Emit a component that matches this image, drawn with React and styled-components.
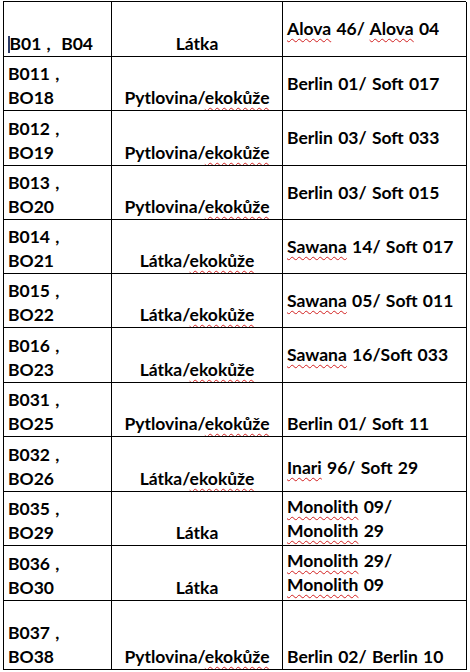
import styled, { createGlobalStyle } from "styled-components";

const GlobalStyle = createGlobalStyle`
  html, body {
    margin: 0;
    padding: 0;
    background: #fff;
  }
  body {
    font-family: Lato, "Liberation Sans", sans-serif;
    color: #000;
  }
`;

// ~word~ marks a word the spell checker flagged
const rows = [
  { h: 55, code: ["B01 ,\u00a0 B04"], caret: true, mat: "Látka", col: ["~Alova~ 46/ ~Alova~ 04"], v: "center" },
  { h: 54, code: ["B011 ,", "BO18"], mat: "Pytlovina/~ekokůže~", col: ["Berlin 01/ Soft 017"], v: "center" },
  { h: 55, code: ["B012 ,", "BO19"], mat: "Pytlovina/~ekokůže~", col: ["Berlin 03/ Soft 033"], v: "center" },
  { h: 54, code: ["B013 ,", "BO20"], mat: "Pytlovina/~ekokůže~", col: ["Berlin 03/ Soft 015"], v: "center" },
  { h: 54, code: ["B014 ,", "BO21"], mat: "Látka/~ekokůže~", col: ["~Sawana~ 14/ Soft 017"], v: "center" },
  { h: 54, code: ["B015 ,", "BO22"], mat: "Látka/~ekokůže~", col: ["~Sawana~ 05/ Soft 011"], v: "center" },
  { h: 55, code: ["B016 ,", "BO23"], mat: "Látka/~ekokůže~", col: ["~Sawana~ 16/Soft 033"], v: "center" },
  { h: 54, code: ["B031 ,", "BO25"], mat: "Pytlovina/~ekokůže~", col: ["Berlin 01/ Soft 11"], v: "bottom" },
  { h: 55, code: ["B032 ,", "BO26"], mat: "Látka/~ekokůže~", col: ["~Inari~ 96/ Soft 29"], v: "center", shift: 4 },
  { h: 54, code: ["B035 ,", "BO29"], mat: "Látka", col: ["~Monolith~ 09/", "~Monolith~ 29"], v: "center" },
  { h: 55, code: ["B036 ,", "BO30"], mat: "Látka", col: ["~Monolith~ 29/", "~Monolith~ 09"], v: "center" },
  { h: 69, code: ["B037 ,", "BO38"], mat: "Pytlovina/~ekokůže~", col: ["Berlin 02/ Berlin 10"], v: "bottom" },
];

function Marked({ text }) {
  return text.split("~").map((part, i) =>
    i % 2 ? <Typo key={i}>{part}</Typo> : <span key={i}>{part}</span>
  );
}

function App() {
  return (
    <>
      <GlobalStyle />
      <Page>
        <Grid style={{ gridTemplateRows: rows.map((r) => r.h + "px").join(" ") }}>
          {rows.map((r, i) => (
            <Row key={i}>
              <Cell $valign="bottom">
                {r.code.map((line, j) => (
                  <Line key={j}>
                    {r.caret && j === 0 && <Caret />}
                    {line}
                  </Line>
                ))}
              </Cell>
              <Cell $valign="bottom" $align="center">
                <Line>
                  <Marked text={r.mat} />
                </Line>
              </Cell>
              <Cell $valign={r.v} $shift={r.shift}>
                {r.col.map((line, j) => (
                  <Line key={j}>
                    <Marked text={line} />
                  </Line>
                ))}
              </Cell>
            </Row>
          ))}
        </Grid>
      </Page>
    </>
  );
}

const Page = styled.div`
  padding: 1px 4px 3px 3px;
`;

const Grid = styled.div`
  display: grid;
  grid-template-columns: 108px 171px 184px;
  border-top: 1px solid #000;
  border-left: 1px solid #000;
`;

const Row = styled.div`
  display: contents;
`;

const Cell = styled.div`
  display: flex;
  flex-direction: column;
  justify-content: ${(p) => (p.$valign === "bottom" ? "flex-end" : "center")};
  align-items: ${(p) => (p.$align === "center" ? "center" : "flex-start")};
  padding: ${(p) => (p.$shift ? p.$shift * 2 : 0)}px 4px 0 4px;
  border-right: 1px solid #000;
  border-bottom: 1px solid #000;
  font-size: 17.5px;
  font-weight: 700;
  line-height: 24px;
  white-space: nowrap;
  overflow: hidden;
`;

const Line = styled.div`
  word-spacing: 1px;
`;

const Typo = styled.span`
  text-decoration: underline wavy #d21f1f;
  text-decoration-thickness: 1px;
  text-underline-offset: 3px;
`;

const Caret = styled.span`
  display: inline-block;
  width: 1.5px;
  height: 17px;
  vertical-align: -3px;
  background: #2c3a66;
`;

export default App;
